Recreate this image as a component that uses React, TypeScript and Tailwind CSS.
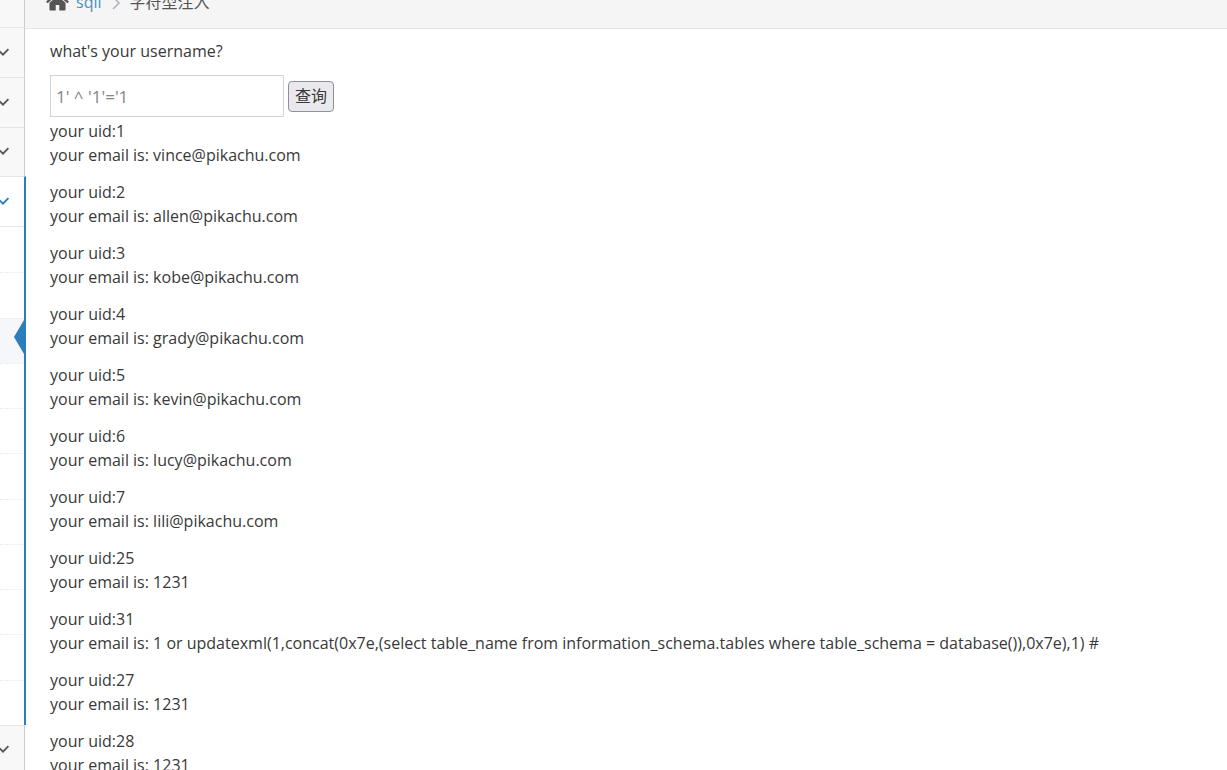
import cx from 'clsx';

const FONT = "font-['Open_Sans','Noto_Sans_CJK_SC',sans-serif]";

const RESULTS = [
  { uid: 1, email: 'vince@pikachu.com' },
  { uid: 2, email: 'allen@pikachu.com' },
  { uid: 3, email: 'kobe@pikachu.com' },
  { uid: 4, email: 'grady@pikachu.com' },
  { uid: 5, email: 'kevin@pikachu.com' },
  { uid: 6, email: 'lucy@pikachu.com' },
  { uid: 7, email: 'lili@pikachu.com' },
  { uid: 25, email: '1231' },
  {
    uid: 31,
    email:
      '1 or updatexml(1,concat(0x7e,(select table_name from information_schema.tables where table_schema = database()),0x7e),1) #',
  },
  { uid: 27, email: '1231' },
  { uid: 28, email: '1231' },
];

const SUB_ITEMS = Array.from({ length: 11 }, (_, index) => index);
const ACTIVE_SUB_ITEM = 2;

const HomeIcon = () => (
  <svg viewBox="0 0 1792 1792" className="h-[25px] w-[25px] fill-[#555]" aria-hidden="true">
    <path d="M1472 992v480q0 26-19 45t-45 19h-384v-384h-256v384h-384q-26 0-45-19t-19-45v-480q0-1 .5-3t.5-3l575-474 575 474q1 2 1 6zm223-69l-62 74q-8 9-21 11h-3q-13 0-21-7l-692-577-692 577q-12 8-24 7-13-2-21-11l-62-74q-8-10-7-23.5t11-21.5l719-599q32-26 76-26t76 26l244 204v-195q0-14 9-23t23-9h192q14 0 23 9t9 23v408l219 182q10 8 11 21.5t-7 23.5z" />
  </svg>
);

const AngleDown = () => (
  <svg viewBox="0 0 10 10" className="h-[10px] w-[10px] fill-none stroke-current stroke-[1.9]" aria-hidden="true">
    <path d="M-2.2 1.6 L3 6.6 L8.4 1.2" />
  </svg>
);

const MenuRow = ({ active, className }: { active?: boolean; className?: string }) => (
  <button
    aria-label="toggle menu"
    className={cx(
      'flex w-full shrink-0 items-center border-b border-[#e5e5e5]',
      active ? 'bg-white text-[#2b7dbc]' : 'border-r border-r-[#ccc] bg-[#f8f8f8] text-[#585858]',
      className
    )}
  >
    <AngleDown />
  </button>
);

const Sidebar = () => (
  <nav className="flex w-[25px] shrink-0 flex-col bg-[#f2f2f2]">
    <div className="h-7 shrink-0 border-r border-b border-[#e5e5e5] border-r-[#ccc] bg-[#f8f8f8]" />
    <MenuRow className="h-[50px]" />
    <MenuRow className="h-[50px]" />
    <MenuRow className="h-12 border-b-0" />
    <div className="relative -mr-px shrink-0 border-t border-r-2 border-t-[#e5e5e5] border-r-[#2b7dbc] bg-white">
      <MenuRow active className="h-[50px]" />
      <ul className="grid h-[498px] auto-rows-fr">
        {SUB_ITEMS.map((item) => (
          <li
            key={item}
            className={cx(
              'relative',
              item > 0 && 'border-t border-dotted border-[#e9e9e9]',
              item === ACTIVE_SUB_ITEM && 'bg-[#f5f7fa]'
            )}
          >
            {item === ACTIVE_SUB_ITEM && (
              <svg viewBox="0 0 10 34" className="absolute top-px right-0 h-[34px] w-[10px] fill-[#2b7dbc]">
                <path d="M10 0 V34 L0 17 Z" />
              </svg>
            )}
          </li>
        ))}
      </ul>
    </div>
    <MenuRow className="h-[50px] border-t" />
  </nav>
);

const Breadcrumbs = () => (
  <div className="flex h-[29px] items-end overflow-hidden border-b border-[#e5e5e5] bg-[#f5f5f5] pb-[14px] pl-5 leading-6">
    <HomeIcon />
    <a href="#sqli" className="ml-[6px] text-[#4c8fbd]">
      sqli
    </a>
    <svg viewBox="0 0 8 14" className="mx-[10px] mb-1 h-[14px] w-2 fill-none stroke-[#b2b6bf] stroke-[1.7]">
      <path d="M1 1 L7 7 L1 13" />
    </svg>
    <span className="text-[#555]">字符型注入</span>
  </div>
);

const App = () => (
  <div className={cx(FONT, 'flex h-screen overflow-hidden bg-white text-base leading-6 text-[#393939]')}>
    <Sidebar />
    <main className="min-w-0 flex-1">
      <Breadcrumbs />
      <div className="px-[25px] pt-[10px]">
        <form onSubmit={(e) => e.preventDefault()}>
          <label htmlFor="username" className="block">
            what's your username?
          </label>
          <div className="mt-3 flex items-center gap-1">
            <input
              id="username"
              type="text"
              defaultValue="1' ^ '1'='1"
              className="h-[42px] w-[234px] border border-[#d5d5d5] px-[5px] text-[17px] text-[#858585] outline-none"
            />
            <button className="h-[31px] rounded border border-[#8f8f9d] bg-[#e9e9ed] px-[6px] leading-6">查询</button>
          </div>
        </form>
        <div className="mt-[2px] flex flex-col gap-[13px]">
          {RESULTS.map(({ uid, email }) => (
            <p key={uid}>
              your uid:{uid}
              <br />
              your email is: {email}
            </p>
          ))}
        </div>
      </div>
    </main>
  </div>
);

export default App;
